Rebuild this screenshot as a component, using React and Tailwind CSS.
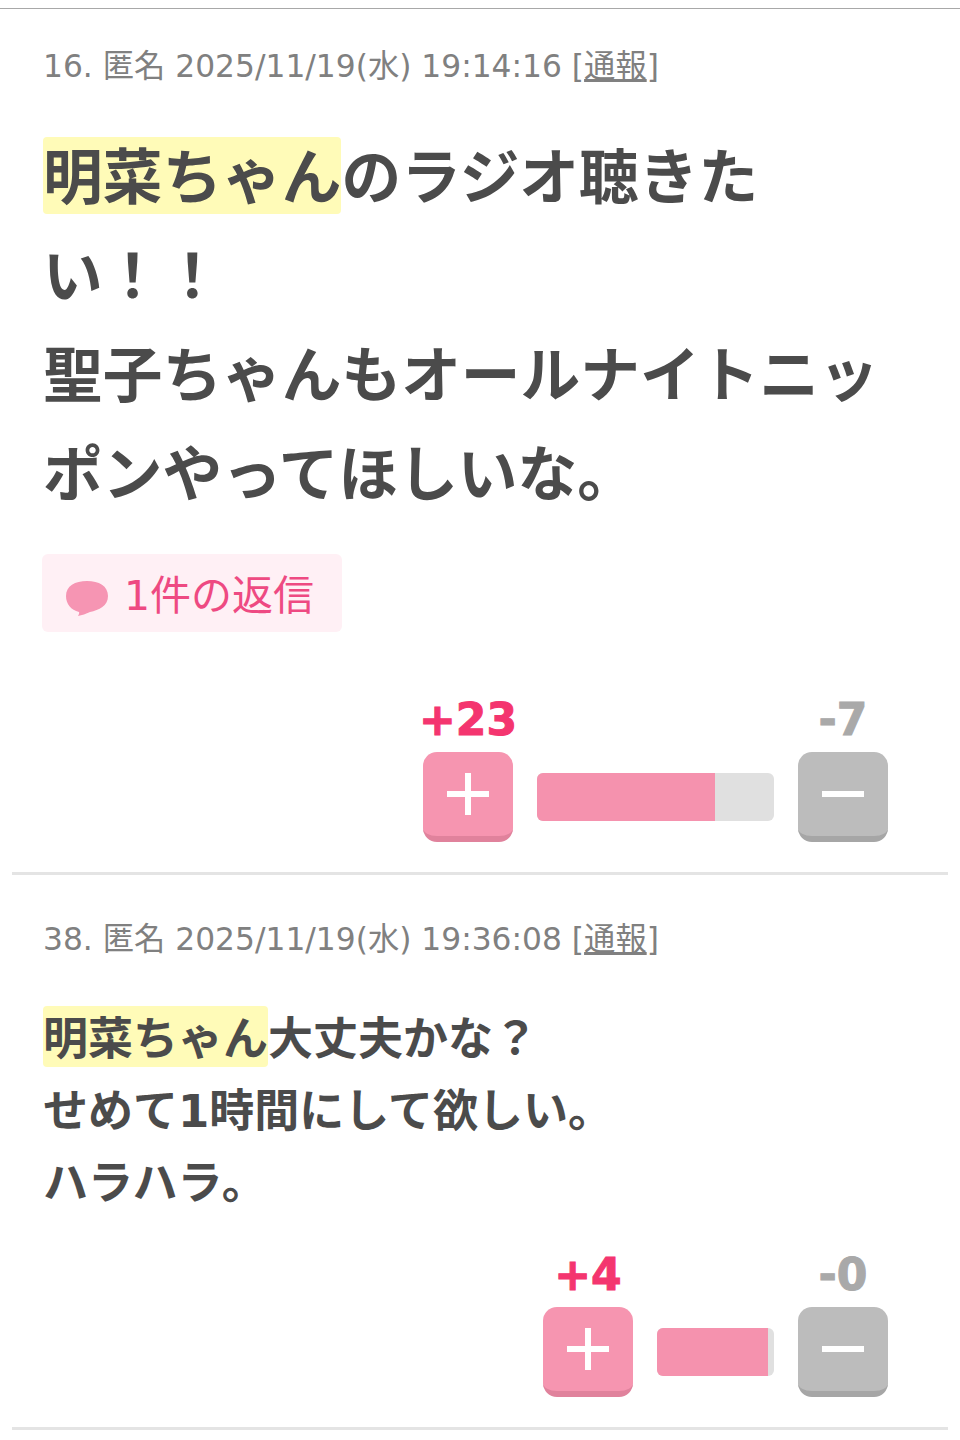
import React from 'react';

const font = { fontFamily: '"DejaVu Sans", "Noto Sans CJK JP", sans-serif' };

const Mark = ({ children }) => (
  <span className="bg-[#fffbb8] rounded-[4px] pt-[7px] pb-[1px]">{children}</span>
);

const Meta = ({ no, date }) => (
  <p className="text-[31.3px] leading-[38px] text-[#808080]">
    {no}. 匿名 {date} [<span className="underline">通報</span>]
  </p>
);

const Bubble = () => (
  <svg width="43" height="37" viewBox="0 0 43 37" className="mr-[15px] mt-[10px] shrink-0">
    <path
      d="M21 1C33 1 42 6 42 16C42 26 33 30 24 32C20 34 16 35 12 36C13 34 13.500 33 13 32C5 30 0 24 0 16C0 6 9 1 21 1Z"
      fill="#f695b3"
    />
  </svg>
);

const Vote = ({ plus, minus, barWidth, fillWidth }) => (
  <div className="flex justify-end items-end pr-[60px]">
    <div className="flex flex-col items-center w-[90px]">
      <span className="text-[44px] leading-[50px] font-bold text-[#f4356f] whitespace-nowrap [-webkit-text-stroke:1px_#f4356f]">{plus}</span>
      <button className="mt-[7px] w-[90px] h-[90px] rounded-[14px] bg-[#f695b0] border-b-[6px] border-[#e0829c] flex items-center justify-center">
        <svg width="44" height="44" viewBox="0 0 44 44">
          <path d="M19 1h6v42h-6zM1 19h42v6H1z" fill="#fff" />
        </svg>
      </button>
    </div>
    <div className={`mx-[24px] mb-[21px] h-[48px] ${barWidth} rounded-[6px] bg-[#e0e0e0] overflow-hidden`}>
      <div className={`h-full ${fillWidth} bg-[#f592ae]`} />
    </div>
    <div className="flex flex-col items-center w-[90px]">
      <span className="text-[44px] leading-[50px] font-bold text-[#a9a9a9] whitespace-nowrap [-webkit-text-stroke:1px_#a9a9a9]">{minus}</span>
      <button className="mt-[7px] w-[90px] h-[90px] rounded-[14px] bg-[#bcbcbc] border-b-[6px] border-[#a6a6a6] flex items-center justify-center">
        <svg width="44" height="8" viewBox="0 0 44 8">
          <rect x="1" y="1" width="42" height="6" fill="#fff" />
        </svg>
      </button>
    </div>
  </div>
);

export default function App() {
  return (
    <div className="bg-white h-[1440px] overflow-hidden pt-[8px]" style={font}>
      <div className="border-t border-[#a8a8a8]" />

      {/* comment 16 */}
      <div className="mx-[12px] h-[866px] border-b-[3px] border-[#e4e4e4] pt-[38px]">
        <div className="pl-[31px] pr-[28px]">
          <Meta no="16" date="2025/11/19(水) 19:14:16" />
          <p className="mt-[44px] text-[59.7px] leading-[99px] font-bold text-[#4b4b4b]">
            <Mark>明菜ちゃん</Mark>のラジオ聴きたい！！
            <br />
            聖子ちゃんもオールナイトニッポンやってほしいな。
          </p>
        </div>
        <div className="ml-[30px] mt-[29px] w-[300px] h-[78px] rounded-[6px] bg-[#fff0f5] flex items-center pl-[24px] text-[41px] text-[#ee4a82]">
          <Bubble />
          <span className="mt-[8px]">1件の返信</span>
        </div>
        <div className="mt-[63px]">
          <Vote plus="+23" minus="-7" barWidth="w-[237px]" fillWidth="w-[75%]" />
        </div>
      </div>

      {/* comment 38 */}
      <div className="mx-[12px] h-[555px] border-b-[3px] border-[#e4e4e4] pt-[45px]">
        <div className="pl-[31px] pr-[28px]">
          <Meta no="38" date="2025/11/19(水) 19:36:08" />
          <p className="mt-[46px] text-[45px] leading-[72px] font-bold text-[#4b4b4b]">
            <Mark>明菜ちゃん</Mark>大丈夫かな？
            <br />
            せめて1時間にして欲しい。
            <br />
            ハラハラ。
          </p>
        </div>
        <div className="mt-[30px]">
          <Vote plus="+4" minus="-0" barWidth="w-[117px]" fillWidth="w-[95%]" />
        </div>
      </div>
    </div>
  );
}
